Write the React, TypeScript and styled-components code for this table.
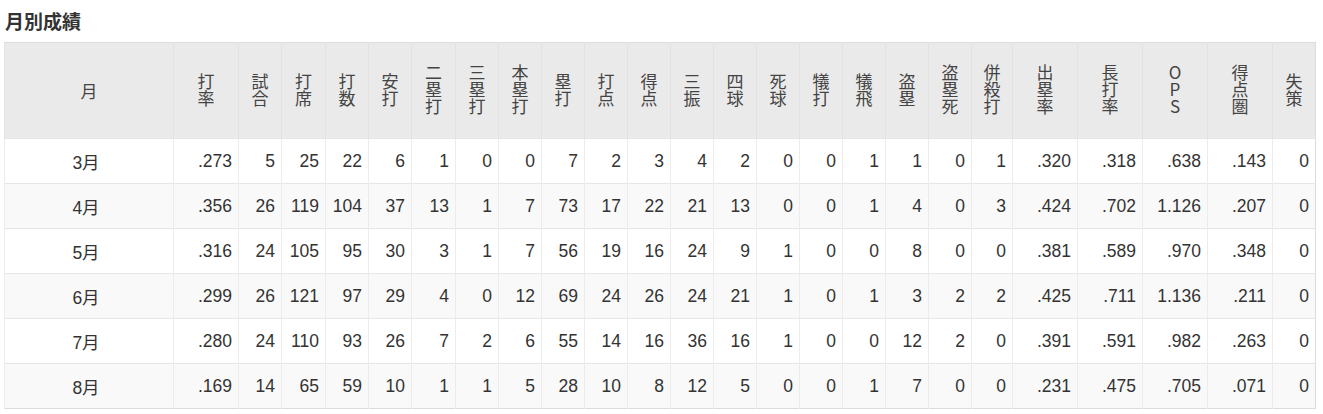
import styled, { createGlobalStyle } from 'styled-components';

const GlobalStyle = createGlobalStyle`
  body {
    margin: 0;
    background: #fff;
    font-family: 'Liberation Sans', Arial, 'Noto Sans CJK JP', sans-serif;
    color: #333;
  }
`;

const Wrapper = styled.div`
  padding: 7px 4px 0 4px;
`;

const Title = styled.h2`
  margin: 0 0 8px 1px;
  height: 27px;
  font-family: 'Noto Sans CJK JP', sans-serif;
  font-size: 19px;
  line-height: 27px;
  font-weight: 700;
  color: #333;
`;

const Table = styled.table`
  width: 1311px;
  border-collapse: collapse;
  table-layout: fixed;
  border: 1px solid #dcdcdc;
`;

const Col = styled.col<{ $w: number }>`
  width: ${(p) => p.$w}px;
`;

const HeadCell = styled.th`
  height: 95px;
  padding: 0;
  background: #eaeaea;
  border-left: 1px solid #e2e2e2;
  font-family: 'Noto Sans CJK JP', sans-serif;
  font-weight: 400;
  font-size: 17px;
  color: #444;
  text-align: center;
  vertical-align: middle;
`;

/* one character per line, stacked */
const Stack = styled.span`
  display: inline-block;
  width: 1em;
  word-break: break-all;
  line-height: 1;
  text-align: center;
`;

const Row = styled.tr<{ $odd: boolean }>`
  background: ${(p) => (p.$odd ? '#f9f9f9' : '#fff')};
  border-top: 1px solid #e6e6e6;
`;

const Cell = styled.td<{ $center?: boolean }>`
  height: 44px;
  padding: 0 6px 0 0;
  border-left: 1px solid #ececec;
  font-size: 17.5px;
  color: #333;
  text-align: ${(p) => (p.$center ? 'center' : 'right')};
  vertical-align: middle;
  white-space: nowrap;
  font-family: 'Liberation Sans', Arial, 'Noto Sans CJK JP', sans-serif;
`;

const columns: { label: string; w: number }[] = [
  { label: '打率', w: 65 },
  { label: '試合', w: 43 },
  { label: '打席', w: 44 },
  { label: '打数', w: 43 },
  { label: '安打', w: 43 },
  { label: '二塁打', w: 44 },
  { label: '三塁打', w: 43 },
  { label: '本塁打', w: 43 },
  { label: '塁打', w: 43 },
  { label: '打点', w: 43 },
  { label: '得点', w: 43 },
  { label: '三振', w: 43 },
  { label: '四球', w: 43 },
  { label: '死球', w: 43 },
  { label: '犠打', w: 43 },
  { label: '犠飛', w: 43 },
  { label: '盗塁', w: 43 },
  { label: '盗塁死', w: 43 },
  { label: '併殺打', w: 41 },
  { label: '出塁率', w: 65 },
  { label: '長打率', w: 65 },
  { label: 'OPS', w: 65 },
  { label: '得点圏', w: 65 },
  { label: '失策', w: 43 },
];

const rows: { month: string; v: string[] }[] = [
  { month: '3月', v: ['.273', '5', '25', '22', '6', '1', '0', '0', '7', '2', '3', '4', '2', '0', '0', '1', '1', '0', '1', '.320', '.318', '.638', '.143', '0'] },
  { month: '4月', v: ['.356', '26', '119', '104', '37', '13', '1', '7', '73', '17', '22', '21', '13', '0', '0', '1', '4', '0', '3', '.424', '.702', '1.126', '.207', '0'] },
  { month: '5月', v: ['.316', '24', '105', '95', '30', '3', '1', '7', '56', '19', '16', '24', '9', '1', '0', '0', '8', '0', '0', '.381', '.589', '.970', '.348', '0'] },
  { month: '6月', v: ['.299', '26', '121', '97', '29', '4', '0', '12', '69', '24', '26', '24', '21', '1', '0', '1', '3', '2', '2', '.425', '.711', '1.136', '.211', '0'] },
  { month: '7月', v: ['.280', '24', '110', '93', '26', '7', '2', '6', '55', '14', '16', '36', '16', '1', '0', '0', '12', '2', '0', '.391', '.591', '.982', '.263', '0'] },
  { month: '8月', v: ['.169', '14', '65', '59', '10', '1', '1', '5', '28', '10', '8', '12', '5', '0', '0', '1', '7', '0', '0', '.231', '.475', '.705', '.071', '0'] },
];

export default function App() {
  return (
    <>
      <GlobalStyle />
      <Wrapper>
        <Title>月別成績</Title>
        <Table>
          <colgroup>
            <Col $w={169} />
            {columns.map((c) => (
              <Col key={c.label} $w={c.w} />
            ))}
          </colgroup>
          <thead>
            <tr>
              <HeadCell>月</HeadCell>
              {columns.map((c) => (
                <HeadCell key={c.label}>
                  <Stack>{c.label}</Stack>
                </HeadCell>
              ))}
            </tr>
          </thead>
          <tbody>
            {rows.map((r, i) => (
              <Row key={r.month} $odd={i % 2 === 1}>
                <Cell $center>{r.month}</Cell>
                {r.v.map((val, j) => (
                  <Cell key={j}>{val}</Cell>
                ))}
              </Row>
            ))}
          </tbody>
        </Table>
      </Wrapper>
    </>
  );
}
